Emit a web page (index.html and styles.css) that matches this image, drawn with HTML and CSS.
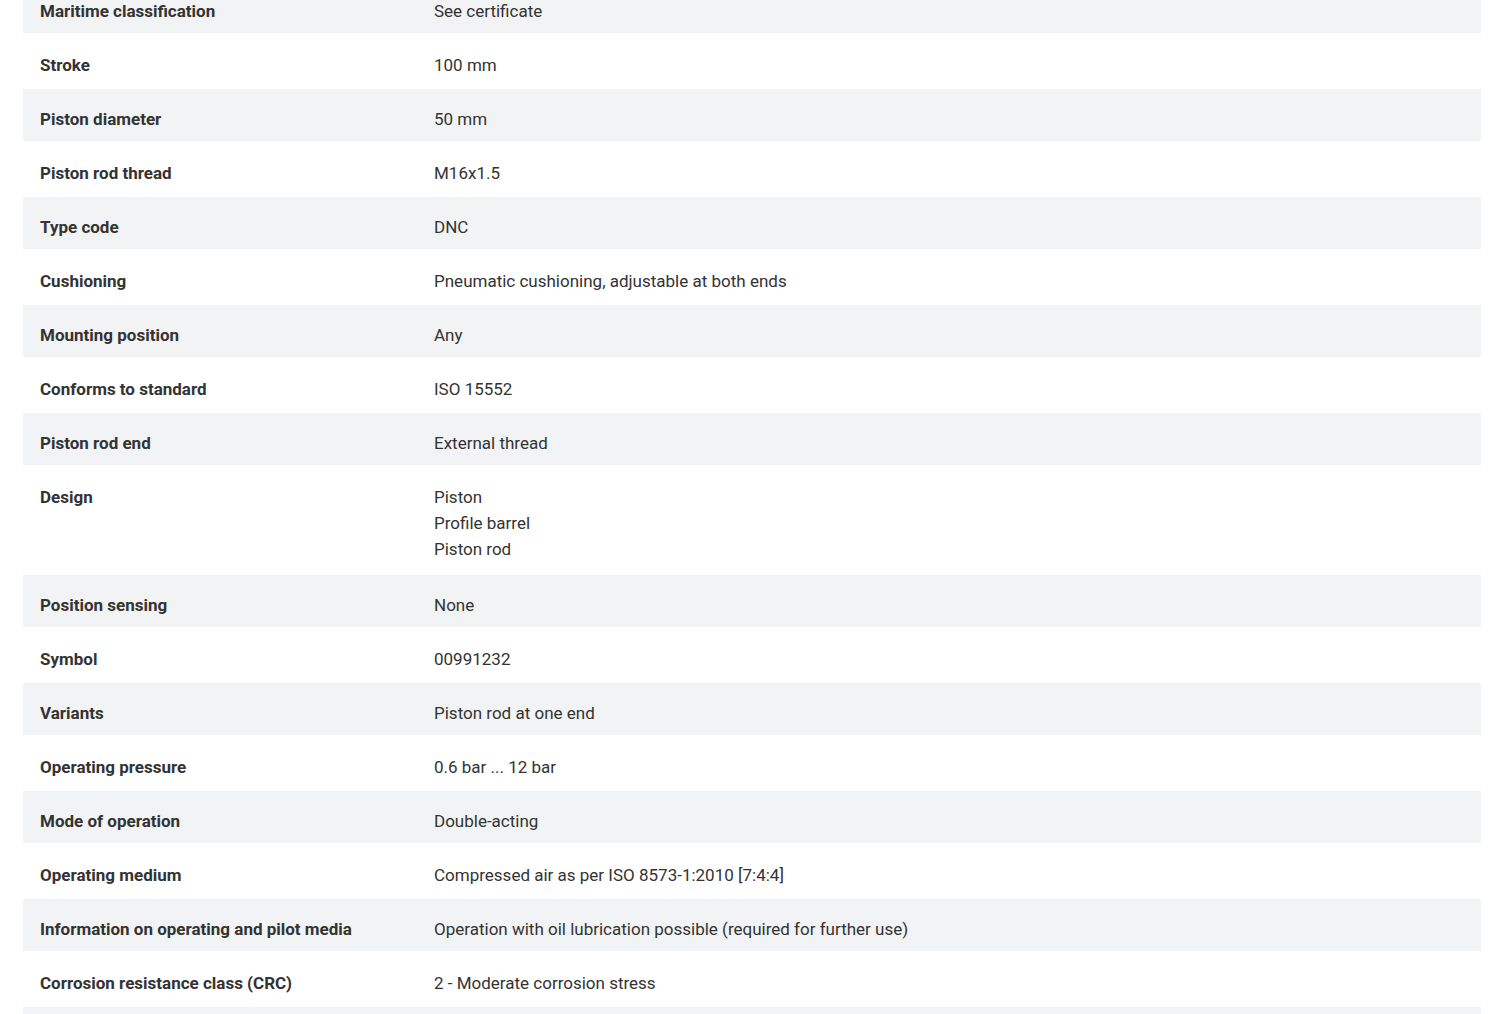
FILE: index.html
```html
<!DOCTYPE html>
<html lang="en">
<head>
<meta charset="utf-8">
<title>Technical data</title>
<link rel="stylesheet" href="styles.css">
</head>
<body>
<div class="page">
  <table class="specs">
    <tbody>
      <tr><th>Maritime classification</th><td>See certificate</td></tr>
      <tr><th>Stroke</th><td>100 mm</td></tr>
      <tr><th>Piston diameter</th><td>50 mm</td></tr>
      <tr><th>Piston rod thread</th><td>M16x1.5</td></tr>
      <tr><th>Type code</th><td>DNC</td></tr>
      <tr><th>Cushioning</th><td>Pneumatic cushioning, adjustable at both ends</td></tr>
      <tr><th>Mounting position</th><td>Any</td></tr>
      <tr><th>Conforms to standard</th><td>ISO 15552</td></tr>
      <tr><th>Piston rod end</th><td>External thread</td></tr>
      <tr class="multi"><th>Design</th><td>Piston<br>Profile barrel<br>Piston rod</td></tr>
      <tr><th>Position sensing</th><td>None</td></tr>
      <tr><th>Symbol</th><td>00991232</td></tr>
      <tr><th>Variants</th><td>Piston rod at one end</td></tr>
      <tr><th>Operating pressure</th><td>0.6 bar ... 12 bar</td></tr>
      <tr><th>Mode of operation</th><td>Double-acting</td></tr>
      <tr><th>Operating medium</th><td>Compressed air as per ISO 8573-1:2010 [7:4:4]</td></tr>
      <tr><th>Information on operating and pilot media</th><td>Operation with oil lubrication possible (required for further use)</td></tr>
      <tr><th>Corrosion resistance class (CRC)</th><td>2 - Moderate corrosion stress</td></tr>
      <tr><th>Ambient temperature</th><td>-20 °C ... 80 °C</td></tr>
    </tbody>
  </table>
</div>
</body>
</html>
```
FILE: styles.css
```css
html, body {
  margin: 0;
  padding: 0;
  background: #ffffff;
}

.page {
  padding: 0 19px 0 23px;
  margin-top: -21px;
  font-family: Roboto, "Open Sans", "Liberation Sans", sans-serif;
  font-size: 17px;
  line-height: 26px;
  color: #333333;
}

.specs {
  width: 100%;
  border-collapse: separate;
  border-spacing: 0 2px;
}

.specs th,
.specs td {
  text-align: left;
  vertical-align: top;
  padding: 17px 0 9px 0;
}

.specs th {
  width: 394px;
  padding-left: 17px;
  font-weight: 700;
}

.specs td {
  font-weight: 400;
}

.specs tr.multi th,
.specs tr.multi td {
  padding-bottom: 11px;
}

.specs tr:nth-child(odd) th,
.specs tr:nth-child(odd) td {
  background: #f2f3f4;
}
```
